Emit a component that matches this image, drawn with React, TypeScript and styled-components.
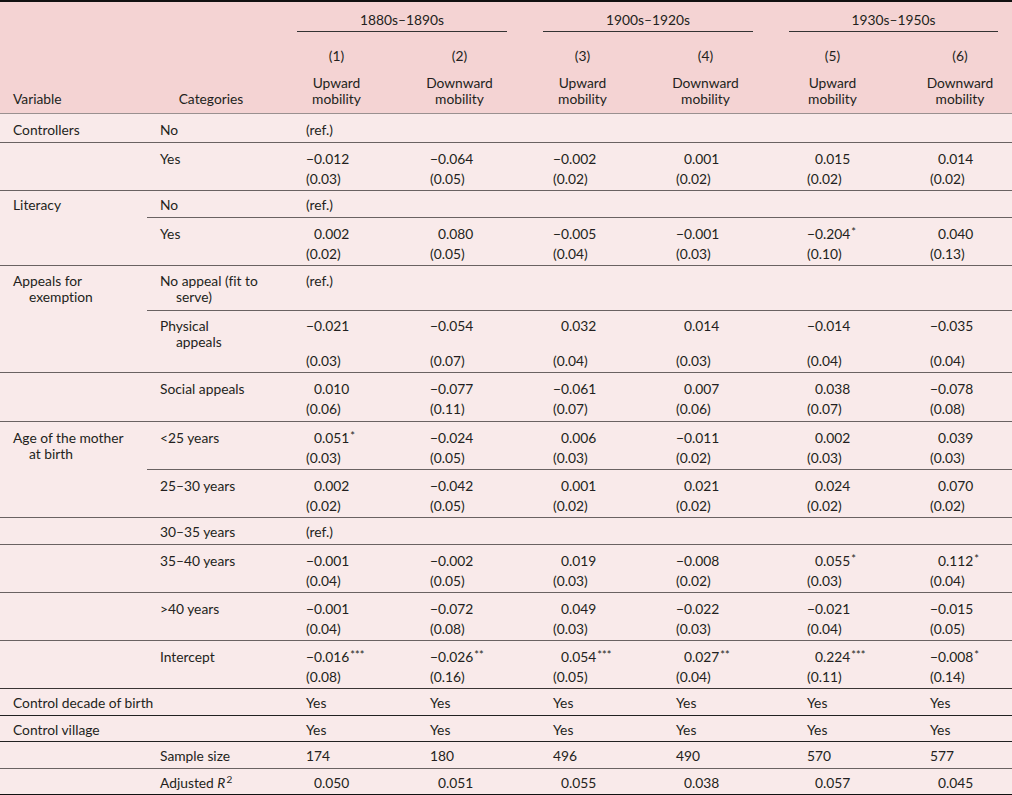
import React from 'react';
import styled, { createGlobalStyle } from 'styled-components';

const GlobalStyle = createGlobalStyle`
  html, body {
    margin: 0;
    padding: 0;
    background: #f9eaea;
  }
  body {
    font-family: 'Lato', 'Noto Sans', sans-serif;
    color: #231f20;
    font-variant-ligatures: none;
  }
`;

const colWidths = [147, 128, 123, 123, 123, 123, 123, 122];
const valuePad = [31, 32, 32, 32, 40, 40];
const headPad = [0, 0, 0, 0, 8, 18];

const FrameStyled = styled.div`
   width: 1012px;
   border-top: 2px solid #111;
   border-bottom: 2px solid #111;
   background: #f9eaea;
`;

const TableStyled = styled.table`
   width: 100%;
   border-collapse: collapse;
   table-layout: fixed;
   font-size: 13.8px;
   line-height: 16px;
`;

const HeadStyled = styled.thead`
   background: #f4d3d3;
   border-bottom: 1px solid #9a9090;
`;

interface IHeadCell {
   $align?: 'left' | 'center';
   $pt?: number;
   $pb?: number;
   $pl?: number;
}

const HeadCellStyled = styled.th<IHeadCell>`
   font-weight: 400;
   text-align: ${({ $align }) => $align ?? 'center'};
   vertical-align: bottom;
   padding: ${({ $pt = 0 }) => $pt}px 0 ${({ $pb = 0 }) => $pb}px ${({ $pl = 0 }) => $pl}px;
`;

const GroupCellStyled = styled.th`
   font-weight: 400;
   padding: 10px 14px 0 22px;
`;

const GroupTitleStyled = styled.div`
   text-align: center;
   padding-bottom: 3px;
   border-bottom: 1px solid #333;
`;

interface IBlock {
   $rule?: string;
}

const BlockStyled = styled.tbody<IBlock>`
   border-top: 1px solid ${({ $rule }) => $rule ?? '#6a6262'};
`;

type RowKind = 'first' | 'single' | 'wrap' | 'coef' | 'coefWrap' | 'se';

const rowPad: Record<RowKind, [number, number]> = {
   first: [8, 4],
   single: [6, 3.5],
   wrap: [7, 5],
   coef: [8, 2],
   coefWrap: [7, 1],
   se: [2, 3.25],
};

const RowStyled = styled.tr<{ $kind: RowKind }>`
   & > td {
      padding-top: ${({ $kind }) => rowPad[$kind][0]}px;
      padding-bottom: ${({ $kind }) => rowPad[$kind][1]}px;
   }
`;

const LabelCellStyled = styled.td<{ $line?: boolean }>`
   vertical-align: top;
   padding-left: 13px;
   padding-right: 4px;
   white-space: nowrap;
   border-top: ${({ $line }) => ($line ? '1px solid #6a6262' : 'none')};
`;

const ValueCellStyled = styled.td<{ $pad: number; $line?: boolean }>`
   vertical-align: top;
   padding-left: ${({ $pad }) => $pad}px;
   white-space: nowrap;
   border-top: ${({ $line }) => ($line ? '1px solid #6a6262' : 'none')};
`;

const WrapLineStyled = styled.div<{ $indent: boolean }>`
   padding-left: ${({ $indent }) => ($indent ? 16 : 0)}px;
`;

const GhostStyled = styled.span`
   visibility: hidden;
`;

const StarsStyled = styled.span`
   font-size: 11px;
   line-height: 16px;
   vertical-align: top;
   position: relative;
   top: -2px;
   margin-left: 1px;
`;

const SquaredStyled = styled.span`
   font-size: 10px;
   line-height: 16px;
   vertical-align: top;
   position: relative;
   top: -4px;
   margin-left: 1px;
`;

const ItalicStyled = styled.i`
   font-style: italic;
`;

interface ISubRow {
   cat?: React.ReactNode[];
   coef: string[];
   se?: string[];
}

interface IGroup {
   variable?: string[];
   wide?: boolean;
   rule?: string;
   first?: boolean;
   rows: ISubRow[];
}

const groups: IGroup[] = [
   { variable: ['Controllers'], first: true, rows: [{ cat: ['No'], coef: ['(ref.)'] }] },
   {
      rows: [
         {
            cat: ['Yes'],
            coef: ['−0.012', '−0.064', '−0.002', '0.001', '0.015', '0.014'],
            se: ['(0.03)', '(0.05)', '(0.02)', '(0.02)', '(0.02)', '(0.02)'],
         },
      ],
   },
   {
      variable: ['Literacy'],
      rows: [
         { cat: ['No'], coef: ['(ref.)'] },
         {
            cat: ['Yes'],
            coef: ['0.002', '0.080', '−0.005', '−0.001', '−0.204*', '0.040'],
            se: ['(0.02)', '(0.05)', '(0.04)', '(0.03)', '(0.10)', '(0.13)'],
         },
      ],
   },
   {
      variable: ['Appeals for', 'exemption'],
      rows: [
         { cat: ['No appeal (fit to', 'serve)'], coef: ['(ref.)'] },
         {
            cat: ['Physical', 'appeals'],
            coef: ['−0.021', '−0.054', '0.032', '0.014', '−0.014', '−0.035'],
            se: ['(0.03)', '(0.07)', '(0.04)', '(0.03)', '(0.04)', '(0.04)'],
         },
      ],
   },
   {
      rows: [
         {
            cat: ['Social appeals'],
            coef: ['0.010', '−0.077', '−0.061', '0.007', '0.038', '−0.078'],
            se: ['(0.06)', '(0.11)', '(0.07)', '(0.06)', '(0.07)', '(0.08)'],
         },
      ],
   },
   {
      variable: ['Age of the mother', 'at birth'],
      rows: [
         {
            cat: ['<25 years'],
            coef: ['0.051*', '−0.024', '0.006', '−0.011', '0.002', '0.039'],
            se: ['(0.03)', '(0.05)', '(0.03)', '(0.02)', '(0.03)', '(0.03)'],
         },
         {
            cat: ['25–30 years'],
            coef: ['0.002', '−0.042', '0.001', '0.021', '0.024', '0.070'],
            se: ['(0.02)', '(0.05)', '(0.02)', '(0.02)', '(0.02)', '(0.02)'],
         },
      ],
   },
   { rows: [{ cat: ['30–35 years'], coef: ['(ref.)'] }] },
   {
      rows: [
         {
            cat: ['35–40 years'],
            coef: ['−0.001', '−0.002', '0.019', '−0.008', '0.055*', '0.112*'],
            se: ['(0.04)', '(0.05)', '(0.03)', '(0.02)', '(0.03)', '(0.04)'],
         },
      ],
   },
   {
      rows: [
         {
            cat: ['>40 years'],
            coef: ['−0.001', '−0.072', '0.049', '−0.022', '−0.021', '−0.015'],
            se: ['(0.04)', '(0.08)', '(0.03)', '(0.03)', '(0.04)', '(0.05)'],
         },
      ],
   },
   {
      rows: [
         {
            cat: ['Intercept'],
            coef: ['−0.016***', '−0.026**', '0.054***', '0.027**', '0.224***', '−0.008*'],
            se: ['(0.08)', '(0.16)', '(0.05)', '(0.04)', '(0.11)', '(0.14)'],
         },
      ],
   },
   { variable: ['Control decade of birth'], wide: true, rule: '#3a3434', rows: [{ coef: Array(6).fill('Yes') }] },
   { variable: ['Control village'], wide: true, rule: '#222', rows: [{ coef: Array(6).fill('Yes') }] },
   { rule: '#222', rows: [{ cat: ['Sample size'], coef: ['174', '180', '496', '490', '570', '577'] }] },
   {
      rows: [
         {
            cat: [
               <>
                  Adjusted <ItalicStyled>R</ItalicStyled>
                  <SquaredStyled>2</SquaredStyled>
               </>,
            ],
            coef: ['0.050', '0.051', '0.055', '0.038', '0.057', '0.045'],
         },
      ],
   },
];

const Lines = ({ lines }: { lines?: React.ReactNode[] }) => (
   <>
      {(lines ?? []).map((line, i) => (
         <WrapLineStyled key={i} $indent={i > 0}>
            {line}
         </WrapLineStyled>
      ))}
   </>
);

const Value = ({ v }: { v?: string }) => {
   if (!v) return null;
   const [, body, stars] = v.match(/^(.*?)(\**)$/) ?? ['', v, ''];
   return (
      <>
         {/^\d\./.test(body) && <GhostStyled>−</GhostStyled>}
         {body}
         {stars && <StarsStyled>{stars}</StarsStyled>}
      </>
   );
};

const ValueCells = ({ values, line }: { values?: string[]; line?: boolean }) => (
   <>
      {valuePad.map((pad, i) => (
         <ValueCellStyled key={i} $pad={pad} $line={line}>
            <Value v={values?.[i]} />
         </ValueCellStyled>
      ))}
   </>
);

const rowKind = (row: ISubRow, first?: boolean): RowKind => {
   const wrapped = (row.cat?.length ?? 0) > 1;
   if (row.se) return wrapped ? 'coefWrap' : 'coef';
   if (wrapped) return 'wrap';
   return first ? 'first' : 'single';
};

const Group = ({ group }: { group: IGroup }) => {
   const totalRows = group.rows.reduce((n, r) => n + (r.se ? 2 : 1), 0);
   const trs: React.ReactNode[] = [];

   group.rows.forEach((row, i) => {
      const line = i > 0;
      trs.push(
         <RowStyled key={`${i}c`} $kind={rowKind(row, group.first)}>
            {i === 0 &&
               (group.wide ? (
                  <LabelCellStyled colSpan={2}>
                     <Lines lines={group.variable} />
                  </LabelCellStyled>
               ) : (
                  <LabelCellStyled rowSpan={totalRows}>
                     <Lines lines={group.variable} />
                  </LabelCellStyled>
               ))}
            {!group.wide && (
               <LabelCellStyled $line={line}>
                  <Lines lines={row.cat} />
               </LabelCellStyled>
            )}
            <ValueCells values={row.coef} line={line} />
         </RowStyled>,
      );
      if (row.se) {
         trs.push(
            <RowStyled key={`${i}s`} $kind='se'>
               <LabelCellStyled />
               <ValueCells values={row.se} />
            </RowStyled>,
         );
      }
   });

   return <BlockStyled $rule={group.rule}>{trs}</BlockStyled>;
};

const periods = ['1880s–1890s', '1900s–1920s', '1930s–1950s'];

const App = () => (
   <>
      <GlobalStyle />
      <FrameStyled>
         <TableStyled>
            <colgroup>
               {colWidths.map((w, i) => (
                  <col key={i} style={{ width: w }} />
               ))}
            </colgroup>
            <HeadStyled>
               <tr>
                  <HeadCellStyled rowSpan={3} $align='left' $pl={13} $pb={6}>
                     Variable
                  </HeadCellStyled>
                  <HeadCellStyled rowSpan={3} $pb={6}>
                     Categories
                  </HeadCellStyled>
                  {periods.map((p) => (
                     <GroupCellStyled key={p} colSpan={2}>
                        <GroupTitleStyled>{p}</GroupTitleStyled>
                     </GroupCellStyled>
                  ))}
               </tr>
               <tr>
                  {headPad.map((pl, i) => (
                     <HeadCellStyled key={i} $pt={16} $pb={6} $pl={pl}>
                        ({i + 1})
                     </HeadCellStyled>
                  ))}
               </tr>
               <tr>
                  {headPad.map((pl, i) => (
                     <HeadCellStyled key={i} $pt={5} $pb={6} $pl={pl}>
                        {i % 2 === 0 ? 'Upward' : 'Downward'}
                        <br />
                        mobility
                     </HeadCellStyled>
                  ))}
               </tr>
            </HeadStyled>
            {groups.map((g, i) => (
               <Group key={i} group={g} />
            ))}
         </TableStyled>
      </FrameStyled>
   </>
);

export default App;
